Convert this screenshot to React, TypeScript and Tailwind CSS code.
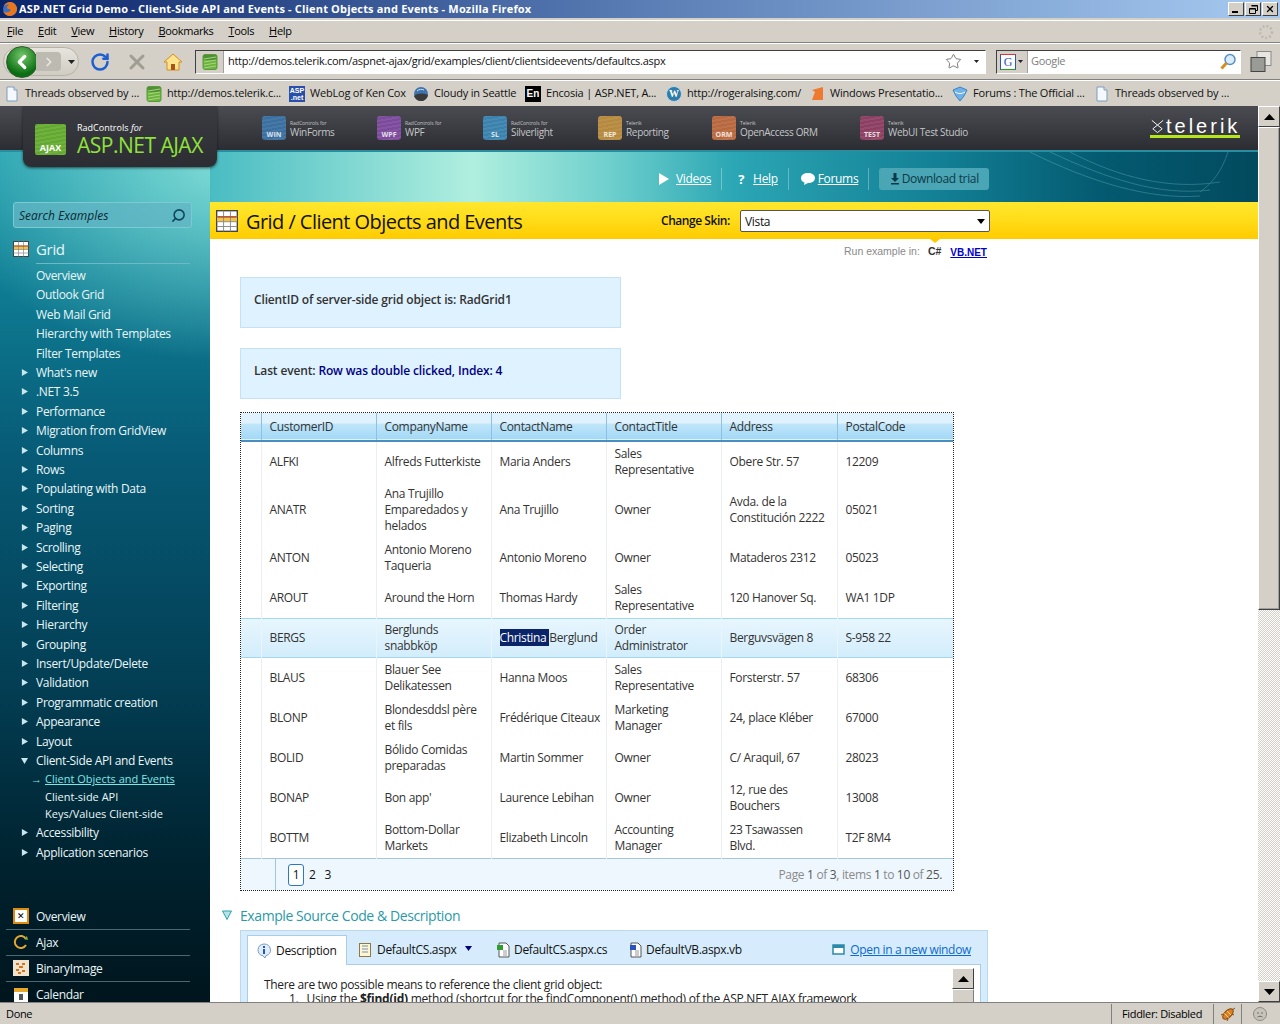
import React from 'react';
import { RotateCw, X, Star, Search, ChevronLeft, ChevronRight } from 'lucide-react';

const menuItems = ['File', 'Edit', 'View', 'History', 'Bookmarks', 'Tools', 'Help'];

const products = [
  { tag: 'WIN', name: 'WinForms', small: 'RadControls for', color: 'bg-[#3a6f9f]', width: 'w-[115px]' },
  { tag: 'WPF', name: 'WPF', small: 'RadControls for', color: 'bg-[#7c4a9b]', width: 'w-[106px]' },
  { tag: 'SL', name: 'Silverlight', small: 'RadControls for', color: 'bg-[#3a82ad]', width: 'w-[115px]' },
  { tag: 'REP', name: 'Reporting', small: 'Telerik', color: 'bg-[#b58a3f]', width: 'w-[114px]' },
  { tag: 'ORM', name: 'OpenAccess ORM', small: 'Telerik', color: 'bg-[#b8683f]', width: 'w-[148px]' },
  { tag: 'TEST', name: 'WebUI Test Studio', small: 'Telerik', color: 'bg-[#8c3f62]', width: 'w-[130px]' },
];

const navTop = ['Overview', 'Outlook Grid', 'Web Mail Grid', 'Hierarchy with Templates', 'Filter Templates'];
const navArrow = [
  "What's new", '.NET 3.5', 'Performance', 'Migration from GridView', 'Columns', 'Rows', 'Populating with Data',
  'Sorting', 'Paging', 'Scrolling', 'Selecting', 'Exporting', 'Filtering', 'Hierarchy', 'Grouping',
  'Insert/Update/Delete', 'Validation', 'Programmatic creation', 'Appearance', 'Layout',
];

const rows = [
  { id: 'ALFKI', company: 'Alfreds Futterkiste', contact: 'Maria Anders', title: 'Sales Representative', address: 'Obere Str. 57', postal: '12209' },
  { id: 'ANATR', company: 'Ana Trujillo Emparedados y helados', contact: 'Ana Trujillo', title: 'Owner', address: 'Avda. de la Constitución 2222', postal: '05021' },
  { id: 'ANTON', company: 'Antonio Moreno Taqueria', contact: 'Antonio Moreno', title: 'Owner', address: 'Mataderos 2312', postal: '05023' },
  { id: 'AROUT', company: 'Around the Horn', contact: 'Thomas Hardy', title: 'Sales Representative', address: '120 Hanover Sq.', postal: 'WA1 1DP' },
  { id: 'BERGS', company: 'Berglunds snabbköp', contact: 'Christina Berglund', title: 'Order Administrator', address: 'Berguvsvägen 8', postal: 'S-958 22', selected: true },
  { id: 'BLAUS', company: 'Blauer See Delikatessen', contact: 'Hanna Moos', title: 'Sales Representative', address: 'Forsterstr. 57', postal: '68306' },
  { id: 'BLONP', company: 'Blondesddsl père et fils', contact: 'Frédérique Citeaux', title: 'Marketing Manager', address: '24, place Kléber', postal: '67000' },
  { id: 'BOLID', company: 'Bólido Comidas preparadas', contact: 'Martin Sommer', title: 'Owner', address: 'C/ Araquil, 67', postal: '28023' },
  { id: 'BONAP', company: "Bon app'", contact: 'Laurence Lebihan', title: 'Owner', address: '12, rue des Bouchers', postal: '13008' },
  { id: 'BOTTM', company: 'Bottom-Dollar Markets', contact: 'Elizabeth Lincoln', title: 'Accounting Manager', address: '23 Tsawassen Blvd.', postal: 'T2F 8M4' },
];

const columns = ['CustomerID', 'CompanyName', 'ContactName', 'ContactTitle', 'Address', 'PostalCode'];

function PageIcon() {
  return (
    <svg width="16" height="16" viewBox="0 0 16 16" className="shrink-0">
      <path d="M3 1h7l3 3v11H3z" fill="#f4f8ff" stroke="#7f9db9" />
      <path d="M10 1v3h3" fill="#dbe6f5" stroke="#7f9db9" />
    </svg>
  );
}

function GreenFavicon() {
  return (
    <svg width="16" height="16" viewBox="0 0 16 16" className="shrink-0">
      <rect x="1" y="0.5" width="14" height="15" rx="2" fill="#6cb33f" stroke="#5a9a3a" />
      <rect x="1.5" y="1" width="13" height="5" fill="#4f8f35" />
      <path d="M2 5l12-2M2 8l12-2M2 11l12-2M2 14l12-2" stroke="#a6d67a" />
    </svg>
  );
}

function BookmarkIcon({ kind }: { kind: string }) {
  if (kind === 'page') return <PageIcon />;
  if (kind === 'green') return <GreenFavicon />;
  if (kind === 'asp')
    return (
      <div className="w-4 h-4 bg-[#2a4fa8] text-white text-[7px] tracking-normal font-bold leading-[7px] flex flex-col items-center justify-center shrink-0 font-['Liberation_Sans',sans-serif]">
        <span>ASP</span>
        <span>.net</span>
      </div>
    );
  if (kind === 'cloud')
    return (
      <svg width="16" height="16" viewBox="0 0 16 16" className="shrink-0">
        <circle cx="8" cy="8" r="7" fill="#3d74b0" />
        <path d="M1 10c4-3 9-3 14-1-1 4-4 6-7 6s-6-2-7-5z" fill="#3a3a3a" />
        <path d="M4 5c2-2 5-2 7-1" stroke="#cfe3f7" fill="none" />
      </svg>
    );
  if (kind === 'en')
    return (
      <div className="w-4 h-4 bg-black text-white text-[10px] tracking-normal font-bold leading-4 text-center shrink-0 font-['Liberation_Sans',sans-serif]">
        En
      </div>
    );
  if (kind === 'wp')
    return (
      <div className="w-4 h-4 rounded-full bg-[#2f7ca8] border border-[#bcd6e6] text-white text-[10px] tracking-normal font-bold leading-[14px] text-center shrink-0 font-['Liberation_Serif',serif]">
        W
      </div>
    );
  if (kind === 'wpf')
    return (
      <svg width="16" height="16" viewBox="0 0 16 16" className="shrink-0">
        <path d="M3 14L6 6 3 4 14 1v13H8z" fill="#ee7a2f" />
      </svg>
    );
  return (
    <svg width="16" height="16" viewBox="0 0 16 16" className="shrink-0">
      <path d="M1 4l7-3 7 3-3 6-4 5-4-5z" fill="#6fb1e8" stroke="#3f83c2" />
      <path d="M3 6c3 2 7 2 10 0" stroke="#fff" fill="none" />
    </svg>
  );
}

const bookmarks = [
  { kind: 'page', label: 'Threads observed by ...', width: 'w-[142px]' },
  { kind: 'green', label: 'http://demos.telerik.c...', width: 'w-[143px]' },
  { kind: 'asp', label: 'WebLog of Ken Cox', width: 'w-[124px]' },
  { kind: 'cloud', label: 'Cloudy in Seattle', width: 'w-[112px]' },
  { kind: 'en', label: 'Encosia | ASP.NET, A...', width: 'w-[141px]' },
  { kind: 'wp', label: 'http://rogeralsing.com/', width: 'w-[143px]' },
  { kind: 'wpf', label: 'Windows Presentatio...', width: 'w-[143px]' },
  { kind: 'forum', label: 'Forums : The Official ...', width: 'w-[142px]' },
  { kind: 'page', label: 'Threads observed by ...', width: 'w-[142px]' },
];

function GridIcon({ size }: { size: number }) {
  return (
    <svg width={size} height={size} viewBox="0 0 16 16" className="shrink-0">
      <rect x="0.5" y="0.5" width="15" height="15" fill="#fff" stroke="#444" />
      <rect x="1" y="5" width="14" height="3.5" fill="#f5c542" />
      <path d="M0.5 5h15M0.5 8.5h15M0.5 12h15M5.5 0.5v15M10.5 0.5v15" stroke="#8a8a8a" strokeWidth="0.7" fill="none" />
      <path d="M1 5h14" stroke="#b5482a" />
    </svg>
  );
}

function NavArrow({ open }: { open?: boolean }) {
  return (
    <svg width="7" height="7" viewBox="0 0 8 8" className="absolute left-[21px] top-[6px]">
      {open ? <path d="M0 1h8L4 8z" fill="#c8e6ee" /> : <path d="M1 0l7 4-7 4z" fill="#c8e6ee" />}
    </svg>
  );
}

function Sidebar() {
  return (
    <aside className="w-[210px] shrink-0 h-full overflow-hidden text-[#eaf6f8] text-[12px] leading-[19px] bg-[radial-gradient(ellipse_300px_200px_at_230px_10px,#7fdcd6_0%,rgba(60,170,185,0)_100%),linear-gradient(180deg,#1c9bac_0%,#0f7f96_14%,#075a75_36%,#033f55_62%,#00222f_84%,#00151d_100%)]">
      <div className="pt-[50px] pl-[13px]">
        <div className="w-[179px] h-[26px] rounded-[3px] border border-[#7ccbd2] bg-[#62b6c4]/75 flex items-center justify-between pl-[5px] pr-[5px]">
          <span className="italic text-[12px] tracking-normal text-[#0c2a33]">Search Examples</span>
          <Search size={15} strokeWidth={2.5} className="text-[#10475a] -scale-x-100" />
        </div>
      </div>
      <div className="mt-[10px] pl-[13px] flex items-center h-[22px]">
        <GridIcon size={16} />
        <span className="ml-[7px] text-[15px]">Grid</span>
      </div>
      <div className="ml-[36px] w-[154px] mt-[3px] border-t border-[#6fb9c6]" />
      <ul className="mt-[2px] pl-[36px]">
        {navTop.map((item) => (
          <li key={item} className="h-[19.4px] whitespace-nowrap">
            {item}
          </li>
        ))}
      </ul>
      <ul>
        {navArrow.map((item) => (
          <li key={item} className="relative h-[19.42px] pl-[36px] whitespace-nowrap">
            <NavArrow />
            {item}
          </li>
        ))}
        <li className="relative h-[19.4px] pl-[36px] whitespace-nowrap">
          <NavArrow open />
          Client-Side API and Events
        </li>
        <li className="relative h-[17.5px] pl-[45px] leading-[17px] text-[11px] tracking-normal whitespace-nowrap">
          <span className="absolute left-[31px] top-0 text-[#7fe6e6]">→</span>
          <span className="text-[#7fe6e6] underline">Client Objects and Events</span>
        </li>
        <li className="h-[17.5px] pl-[45px] leading-[17px] text-[11px] tracking-normal whitespace-nowrap">Client-side API</li>
        <li className="h-[18px] pl-[45px] leading-[17px] text-[11px] tracking-normal whitespace-nowrap">Keys/Values Client-side</li>
        <li className="relative h-[20px] pl-[36px] whitespace-nowrap">
          <NavArrow />
          Accessibility
        </li>
        <li className="relative h-[19.35px] pl-[36px] whitespace-nowrap">
          <NavArrow />
          Application scenarios
        </li>
      </ul>
      <ul className="mt-[41px] ml-[6px] w-[184px]">
        <BottomNav label="Overview" icon={<div className="w-4 h-4 bg-white border-2 border-[#e08a10] text-[9px] leading-[12px] text-center text-black">✕</div>} />
        <BottomNav
          label="Ajax"
          icon={
            <svg width="16" height="16" viewBox="0 0 16 16">
              <path d="M13 11a6 6 0 1 1 0-6" fill="none" stroke="#e3a830" strokeWidth="2" />
              <path d="M11 5l4 1-1-4z" fill="#7cb342" />
            </svg>
          }
        />
        <BottomNav
          label="BinaryImage"
          icon={
            <svg width="16" height="16" viewBox="0 0 16 16">
              <rect width="16" height="16" fill="#f1e4cf" />
              <path d="M3 3h3v2H3zM9 3h3v2H9zM6 6h4v2H6zM3 9h3v2H3zM9 10h3v2H9zM5 12h3v2H5z" fill="#d9731a" />
            </svg>
          }
        />
        <BottomNav
          label="Calendar"
          icon={
            <svg width="16" height="16" viewBox="0 0 16 16">
              <rect x="1" y="1" width="14" height="15" fill="#fff" />
              <rect x="1" y="1" width="14" height="4" fill="#e8a82a" />
              <rect x="6" y="7" width="4" height="6" fill="#555" />
            </svg>
          }
        />
      </ul>
    </aside>
  );
}

function BottomNav({ label, icon }: { label: string; icon: React.ReactNode }) {
  return (
    <li className="h-[26px] flex items-center border-b border-[#4e6670] pl-[7px] last:border-b-0">
      <span className="w-[23px] shrink-0">{icon}</span>
      <span>{label}</span>
    </li>
  );
}

function Scrollbar() {
  return (
    <div className="w-[22px] shrink-0 flex flex-col bg-[repeating-conic-gradient(#d4d0c8_0%_25%,#ffffff_0%_50%)] bg-[length:2px_2px]">
      <ScrollButton up />
      <div className="h-[483px] w-full bg-[#d4d0c8] border border-t-white border-l-white border-r-[#404040] border-b-[#404040] shadow-[inset_-1px_-1px_0_#a0a0a0]" />
      <div className="flex-1" />
      <ScrollButton />
    </div>
  );
}

function ScrollButton({ up }: { up?: boolean }) {
  return (
    <div className="w-full h-[21px] shrink-0 bg-[#d4d0c8] border border-t-white border-l-white border-r-[#404040] border-b-[#404040] flex items-center justify-center">
      <svg width="11" height="6" viewBox="0 0 11 6">
        <path d={up ? 'M5.5 0L11 6H0z' : 'M0 0h11L5.5 6z'} fill="#000" />
      </svg>
    </div>
  );
}

function Grid() {
  return (
    <div className="ml-[30px] mt-[13px] w-[714px] border border-dotted border-[#222] text-[12px] leading-[16px] text-[#333]">
      <table className="w-full table-fixed border-collapse">
        <colgroup>
          <col className="w-[20px]" />
          <col className="w-[115px]" />
          <col className="w-[115px]" />
          <col className="w-[115px]" />
          <col className="w-[115px]" />
          <col className="w-[116px]" />
          <col className="w-[116px]" />
        </colgroup>
        <thead>
          <tr className="h-[28px] border-b-2 border-[#4a8ec0] bg-[linear-gradient(180deg,#dff2fd_0%,#dff2fd_38%,#bfe5fa_44%,#a3d9f6_100%)]">
            <th className="border-r border-[#8cc1e2]" />
            {columns.map((c) => (
              <th key={c} className="px-2 pt-[1px] font-normal text-left border-r border-[#8cc1e2] last:border-r-0">
                {c}
              </th>
            ))}
          </tr>
        </thead>
        <tbody>
          {rows.map((r) => {
            const cell = r.selected
              ? 'px-2 py-[4px] border-r border-[#eaf5fb] last:border-r-0 shadow-[inset_0_1px_0_#a4d8f2,inset_0_-1px_0_#a4d8f2]'
              : 'px-2 py-[4px] border-r border-[#eceff1] last:border-r-0';
            return (
              <tr key={r.id} className={r.selected ? 'h-[40px] bg-[linear-gradient(180deg,#e8f6fe_0%,#d2edfb_100%)]' : 'h-[40px]'}>
                <td className={cell} />
                <td className={cell}>{r.id}</td>
                <td className={cell}>{r.company}</td>
                <td className={`${cell} whitespace-nowrap`}>
                  {r.selected ? (
                    <>
                      <span className="bg-[#0a246a] text-white">Christina </span>Berglund
                    </>
                  ) : (
                    r.contact
                  )}
                </td>
                <td className={cell}>{r.title}</td>
                <td className={cell}>{r.address}</td>
                <td className={cell}>{r.postal}</td>
              </tr>
            );
          })}
          <tr className="border-t border-[#a4c6da] bg-[#eef7fe]">
            <td colSpan={7} className="p-0">
              <div className="flex h-[31px] items-center">
                <div className="w-[35px] h-full border-r border-[#a4c6da]" />
                <div className="ml-[12px] flex items-center gap-[5px] text-[#111]">
                  <span className="w-[16px] h-[22px] rounded-[3px] border border-[#2a78c8] bg-white text-center leading-[20px]">1</span>
                  <span>2</span>
                  <span className="ml-[4px]">3</span>
                </div>
                <div className="ml-auto mr-[11px] text-[#8a8a8a]">
                  Page <span className="text-[#555]">1</span> of <span className="text-[#555]">3</span>, items <span className="text-[#555]">1</span> to <span className="text-[#555]">10</span> of <span className="text-[#555]">25.</span>
                </div>
              </div>
            </td>
          </tr>
        </tbody>
      </table>
    </div>
  );
}

function SourcePanel() {
  return (
    <div className="mt-[15px]">
      <div className="pl-[12px] flex items-center h-[18px]">
        <svg width="10" height="10" viewBox="0 0 10 10" className="mr-[8px]">
          <path d="M0.5 1h9L5 9.5z" fill="#b4e4ea" stroke="#2fa0ad" />
        </svg>
        <span className="text-[14px] tracking-[-0.42px] text-[#2a9aa8]">Example Source Code &amp; Description</span>
      </div>
      <div className="ml-[30px] mt-[6px] w-[748px] border border-[#bcd9ec] bg-[#d6ecfc] px-[6px] pt-[4px]">
        <div className="flex items-end h-[29px] text-[12px] text-[#111]">
          <div className="w-[100px] h-[30px] -mb-px bg-white border border-b-0 border-[#a9cde6] flex items-center pl-[8px] gap-[4px] relative z-10 shrink-0">
            <svg width="16" height="16" viewBox="0 0 16 16" className="shrink-0">
              <path d="M8 1a6.5 6 0 0 1 2 11.7L9 15l-2-2.2A6.5 6 0 0 1 8 1z" fill="#dfeeff" stroke="#7f9db9" />
              <rect x="7" y="6" width="2" height="5" fill="#2a55c0" />
              <rect x="7" y="3" width="2" height="2" fill="#2a55c0" />
            </svg>
            Description
          </div>
          <div className="w-[150px] h-[29px] flex items-center pl-[11px] gap-[5px] shrink-0">
            <svg width="14" height="14" viewBox="0 0 14 14" className="shrink-0">
              <rect x="1.5" y="0.5" width="11" height="13" fill="#fff6cf" stroke="#8a7a4a" />
              <path d="M4 3h6M4 6h6M4 9h6" stroke="#6f8fbf" />
            </svg>
            DefaultCS.aspx
            <svg width="7" height="5" viewBox="0 0 7 5" className="ml-[3px] mb-[3px]">
              <path d="M0 0h7L3.5 5z" fill="#00007f" />
            </svg>
          </div>
          <div className="w-[132px] h-[29px] flex items-center gap-[3px] shrink-0">
            <svg width="14" height="16" viewBox="0 0 14 16" className="shrink-0">
              <path d="M2 1h7l3 3v11H2z" fill="#fff" stroke="#555" />
              <path d="M6 9h4M6 11h4M6 13h4" stroke="#9a9a9a" />
              <path d="M0 3h6v5H0z" fill="#2e9e2e" />
            </svg>
            DefaultCS.aspx.cs
          </div>
          <div className="h-[29px] flex items-center gap-[3px] shrink-0">
            <svg width="14" height="16" viewBox="0 0 14 16" className="shrink-0">
              <path d="M2 1h7l3 3v11H2z" fill="#fff" stroke="#555" />
              <path d="M6 9h4M6 11h4M6 13h4" stroke="#9a9a9a" />
              <path d="M1 3h6v5H1z" fill="#2a55c0" />
            </svg>
            DefaultVB.aspx.vb
          </div>
          <div className="ml-auto mr-[10px] h-[29px] flex items-center gap-[5px] text-[#0a6ad0] underline shrink-0">
            <svg width="13" height="12" viewBox="0 0 13 12" className="shrink-0">
              <rect x="1" y="1" width="11" height="9" fill="#fff" stroke="#2a8aa8" strokeWidth="1.5" />
              <rect x="1" y="1" width="11" height="3" fill="#2a8aa8" />
            </svg>
            Open in a new window
          </div>
        </div>
        <div className="bg-white border border-[#a9cde6] h-[60px] relative pl-[16px] pt-[13px] text-[12px] leading-[14px] text-[#222]">
          <p>There are two possible means to reference the client grid object:</p>
          <p className="pl-[25px] flex gap-[8px] tracking-[-0.25px] whitespace-nowrap">
            <span>1.</span>
            <span>
              Using the <b>$find(id)</b> method (shortcut for the findComponent() method) of the ASP.NET AJAX framework
            </span>
          </p>
          <div className="absolute right-[6px] top-[3px] w-[22px]">
            <ScrollButton up />
            <div className="h-[30px] bg-[#d4d0c8] border border-t-white border-l-white border-r-[#808080]" />
          </div>
        </div>
      </div>
    </div>
  );
}

export default function App() {
  return (
    <div className="w-[1280px] h-[1024px] overflow-hidden flex flex-col bg-[#d4d0c8] tracking-[-0.33px] font-['Open_Sans','Noto_Sans',sans-serif]">
      {/* window title */}
      <div className="h-[18px] shrink-0 flex items-center bg-[linear-gradient(90deg,#0a246a_0%,#5a7db5_50%,#a6caf0_100%)] text-white text-[11px] tracking-[0.17px] font-bold">
        <svg width="16" height="16" viewBox="0 0 16 16" className="ml-[2px] mr-[1px] shrink-0">
          <circle cx="8" cy="8" r="7" fill="#3d6fc0" />
          <path d="M2 5c1-3 4-4 6-4 3 0 6 2 7 6 .5 4-3 8-7 8-3 0-6-2-7-5 1 1 3 2 5 1 2 0 3-2 2-3-2 0-3 0-3-2 0-1 1-1 2-2-2-1-3 0-5 1z" fill="#e8761c" />
        </svg>
        <span className="whitespace-nowrap">ASP.NET Grid Demo - Client-Side API and Events - Client Objects and Events - Mozilla Firefox</span>
        <div className="ml-auto mr-[2px] flex gap-[1px]">
          {['_', '', 'x'].map((b, i) => (
            <div key={i} className="w-[16px] h-[14px] bg-[#d4d0c8] border border-t-white border-l-white border-r-[#404040] border-b-[#404040] flex items-center justify-center text-black">
              {i === 0 && <div className="w-[6px] h-[2px] bg-black mt-[6px] -ml-[2px]" />}
              {i === 1 && (
                <svg width="9" height="9" viewBox="0 0 9 9">
                  <path d="M2.5 0.5h6v5h-2M0.5 3.5h6v5h-6z M0.5 4h6M2.5 1h6" fill="none" stroke="#000" />
                </svg>
              )}
              {i === 2 && <X size={10} strokeWidth={3} />}
            </div>
          ))}
        </div>
      </div>

      {/* menu bar */}
      <div className="h-[23px] shrink-0 mt-[2px] border-t border-white border-b border-b-[#808080] flex items-center pl-[7px] gap-[15px] text-[11px] text-black">
        {menuItems.map((m) => (
          <span key={m}>
            <span className="underline">{m[0]}</span>
            {m.slice(1)}
          </span>
        ))}
        <svg width="16" height="16" viewBox="0 0 16 16" className="ml-auto mr-[6px]">
          <circle cx="8" cy="8" r="6" fill="none" stroke="#bdb9b0" strokeWidth="2.5" strokeDasharray="2 2" />
        </svg>
      </div>

      {/* nav toolbar */}
      <div className="h-[37px] shrink-0 border-t border-white border-b border-b-[#808080] flex items-center pl-[3px] text-[11px]">
        <div className="relative w-[76px] h-[29px] rounded-full bg-[linear-gradient(180deg,#e6e4dd,#cfccc3)] border border-[#b5b2a8] flex items-center">
          <div className="absolute left-[2px] -top-[2px] w-[32px] h-[32px] rounded-full bg-[radial-gradient(circle_at_50%_30%,#72c76a,#0c6e12_70%)] border border-[#2c5a2c] flex items-center justify-center">
            <ChevronLeft size={22} strokeWidth={3.5} className="text-white" />
          </div>
          <div className="absolute left-[32px] top-[4px] w-[25px] h-[19px] rounded-r-[4px] bg-[#bdbab1] flex items-center justify-center">
            <ChevronRight size={14} strokeWidth={3} className="text-[#e8e6df]" />
          </div>
          <svg width="7" height="4" viewBox="0 0 7 4" className="absolute left-[64px]">
            <path d="M0 0h7L3.5 4z" fill="#222" />
          </svg>
        </div>
        <RotateCw size={20} strokeWidth={3} className="ml-[11px] text-[#1d5fd0]" />
        <X size={24} strokeWidth={3} className="ml-[15px] text-[#a09d95]" />
        <svg width="20" height="20" viewBox="0 0 20 20" className="ml-[14px]">
          <path d="M10 2L1 10h3v8h12v-8h3z" fill="#fbe48c" stroke="#d98b1c" />
          <rect x="8" y="12" width="4" height="6" fill="#a8521c" />
        </svg>
        <div className="ml-[12px] w-[791px] h-[24px] border border-t-[#404040] border-l-[#404040] border-r-white border-b-white bg-white flex items-center">
          <div className="w-[28px] h-full bg-[#d4d0c8] flex items-center justify-center border-r border-[#a0a0a0]">
            <GreenFavicon />
          </div>
          <span className="ml-[4px] text-[#111] tracking-[-0.29px] whitespace-nowrap">http://demos.telerik.com/aspnet-ajax/grid/examples/client/clientsideevents/defaultcs.aspx</span>
          <Star size={17} strokeWidth={1.2} className="ml-auto text-[#666]" />
          <svg width="5" height="3" viewBox="0 0 7 4" className="ml-[12px] mr-[6px]">
            <path d="M0 0h7L3.5 4z" fill="#222" />
          </svg>
        </div>
        <div className="ml-[10px] w-[245px] h-[24px] border border-t-[#404040] border-l-[#404040] border-r-white border-b-white bg-white flex items-center">
          <div className="w-[31px] h-full bg-[#d4d0c8] flex items-center pl-[3px] gap-[2px] border-r border-[#a0a0a0]">
            <div className="w-[16px] h-[16px] bg-white border border-t-[#d33] border-l-[#2a55c0] border-r-[#2a55c0] border-b-[#2a9e2a] text-[#2a55c0] text-[12px] leading-[14px] text-center font-['Liberation_Serif',serif]">G</div>
            <svg width="5" height="3" viewBox="0 0 7 4">
              <path d="M0 0h7L3.5 4z" fill="#222" />
            </svg>
          </div>
          <span className="ml-[3px] text-[#808080]">Google</span>
          <svg width="18" height="18" viewBox="0 0 18 18" className="ml-auto mr-[3px]">
            <circle cx="11" cy="6.5" r="5" fill="#d8edfb" stroke="#5a8fc4" strokeWidth="1.5" />
            <path d="M7.5 10L2.5 15.5" stroke="#d98b1c" strokeWidth="3" />
          </svg>
        </div>
        <svg width="24" height="24" viewBox="0 0 24 24" className="ml-[8px]">
          <rect x="8" y="1.5" width="14" height="14" fill="#e8e6e0" stroke="#8a8a8a" />
          <rect x="2" y="7.5" width="14" height="14" fill="#9a9a96" stroke="#444" />
        </svg>
      </div>

      {/* bookmarks toolbar */}
      <div className="h-[26px] shrink-0 flex items-center pl-[4px] text-[11px] tracking-[-0.2px] text-[#111] border-t border-white">
        {bookmarks.map((b, i) => (
          <div key={i} className={`${b.width} flex items-center gap-[5px] whitespace-nowrap`}>
            <BookmarkIcon kind={b.kind} />
            <span>{b.label}</span>
          </div>
        ))}
      </div>

      {/* page + scrollbar */}
      <div className="flex h-[896px] shrink-0 overflow-hidden bg-white">
        <div className="flex-1 min-w-0 relative flex flex-col">
          {/* dark product strip */}
          <div className="h-[46px] shrink-0 bg-[linear-gradient(180deg,#4a4c52_0%,#2b2d32_100%)] border-b-2 border-[#2b8ea0] flex items-start pl-[262px] pt-[10px]">
            {products.map((p) => (
              <div key={p.tag} className={`${p.width} shrink-0 flex items-center gap-[4px]`}>
                <div className={`${p.color} bg-[repeating-linear-gradient(170deg,rgba(255,255,255,0.07)_0px,rgba(255,255,255,0.07)_2px,rgba(0,0,0,0)_2px,rgba(0,0,0,0)_4px)] w-[24px] h-[24px] rounded-[3px] flex items-end justify-center text-[7px] tracking-normal font-bold text-white/80 leading-[10px]`}>{p.tag}</div>
                <div className="text-[#c4c6c8] text-[10px] leading-[10px] whitespace-nowrap">
                  <div className="text-[5px] leading-[8px] tracking-normal">{p.small}</div>
                  <div>{p.name}</div>
                </div>
              </div>
            ))}
            <div className="absolute left-[1150px] top-[7px] w-[90px] h-[25px] text-white text-[20px] leading-[22px] tracking-[3px] font-['Liberation_Sans',sans-serif] border-b-[3px] border-[#b5e61d] flex items-center whitespace-nowrap overflow-hidden pt-[3px]">
              <svg width="15" height="16" viewBox="0 0 16 16" className="mr-[1px] shrink-0">
                <path d="M2 2l6 5 6-5M8 7l5 4-5 4-5-4z" fill="none" stroke="#fff" />
              </svg>
              <span>telerik</span>
            </div>
          </div>
          {/* logo card */}
          <div className="absolute left-[23px] top-0 w-[194px] h-[61px] rounded-b-[8px] bg-[linear-gradient(180deg,#3a3c42,#2b2d32)] shadow-[0_1px_3px_rgba(0,0,0,0.6)] z-10 flex items-center pl-[12px] pt-[6px]">
            <div className="w-[31px] h-[31px] rounded-[2px] bg-[#6fb43a] bg-[repeating-linear-gradient(170deg,rgba(0,0,0,0.08)_0px,rgba(0,0,0,0.08)_2px,rgba(255,255,255,0)_2px,rgba(255,255,255,0)_4px)] flex items-end justify-center text-white text-[9px] tracking-normal font-bold leading-[14px] shrink-0">AJAX</div>
            <div className="ml-[11px]">
              <div className="text-white text-[9px] tracking-normal leading-[10px]">
                RadControls <i>for</i>
              </div>
              <div className="text-[#8fe23a] text-[21px] tracking-[-0.5px] leading-[24px] whitespace-nowrap">ASP.NET AJAX</div>
            </div>
          </div>

          <div className="flex flex-1 min-h-0">
            <Sidebar />
            <div className="relative flex-1 min-w-0 overflow-hidden">
              {/* teal link strip */}
              <div className="relative h-[50px] overflow-hidden bg-[linear-gradient(90deg,#49bcc2_0%,#b0efdf_25%,#6fd0cd_38%,#2ba6b4_50%,#127f94_70%,#045a70_85%,#024a5e_100%)] flex items-center pl-[449px] pt-[4px] text-[12px] text-white">
                <svg width="860" height="50" viewBox="0 0 860 50" className="absolute left-[800px] top-0 opacity-25">
                  <path d="M20 0c60 30 120 48 170 44M40 0c60 28 110 44 160 38M60 0c50 26 100 38 150 30M218 0c-6 18-14 30-28 40" fill="none" stroke="#9fe6ea" />
                </svg>
                <svg width="10" height="12" viewBox="0 0 10 12" className="shrink-0">
                  <path d="M0 0l10 6-10 6z" fill="#fff" />
                </svg>
                <span className="ml-[7px] underline">Videos</span>
                <span className="ml-[10px] w-px h-[22px] bg-white/30" />
                <span className="ml-[16px] font-bold text-[13px] leading-none">?</span>
                <span className="ml-[9px] underline">Help</span>
                <span className="ml-[10px] w-px h-[22px] bg-white/30" />
                <svg width="16" height="12" viewBox="0 0 16 12" className="ml-[11px] shrink-0">
                  <path d="M8 0c4 0 7 2 7 5s-3 5-7 5L4 12l.5-2.5C2 9 1 7 1 5c0-3 3-5 7-5z" fill="#fff" />
                </svg>
                <span className="ml-[2px] underline">Forums</span>
                <span className="ml-[10px] w-px h-[22px] bg-white/30" />
                <span className="ml-[10px] w-[110px] h-[22px] rounded-[3px] bg-[#4aa5b5] flex items-center justify-center gap-[2px] text-[#0c3a48]">
                  <svg width="10" height="12" viewBox="0 0 10 12" className="shrink-0">
                    <path d="M3.5 0h3v5H9L5 9 1 5h2.5zM1 10h8v1.5H1z" fill="#0c3a48" />
                  </svg>
                  Download trial
                </span>
              </div>
              {/* yellow title strip */}
              <div className="relative h-[37px] bg-[linear-gradient(180deg,#ffe62e_0%,#ffdf1d_40%,#ffcb00_100%)] flex items-center pl-[6px]">
                <GridIcon size={22} />
                <span className="ml-[8px] mt-[2px] text-[20px] tracking-[-0.55px] text-[#111] whitespace-nowrap">Grid / Client Objects and Events</span>
                <span className="absolute left-[451px] top-[10px] text-[12px] tracking-[-0.45px] font-semibold text-[#111]">Change Skin:</span>
                <div className="absolute left-[530px] top-[8px] w-[250px] h-[22px] bg-white border border-[#555] rounded-[2px] flex items-center justify-between pl-[4px] pr-[4px] pt-[1px] text-[12px] text-[#111]">
                  Vista
                  <svg width="8" height="5" viewBox="0 0 8 5">
                    <path d="M0 0h8L4 5z" fill="#000" />
                  </svg>
                </div>
                <div className="absolute left-[720px] top-[37px] w-0 h-0 border-x-[5px] border-x-transparent border-t-[4px] border-t-[#ffcb00]" />
              </div>
              {/* language switch */}
              <div className="h-[26px] flex items-center pl-[634px] text-[10.5px] tracking-normal font-['Liberation_Sans',sans-serif] text-[#8a8a8a] whitespace-nowrap">
                Run example in:
                <b className="ml-[8px] text-[#333]">C#</b>
                <b className="ml-[9px] text-[10px] text-[#0000cc] underline">VB.NET</b>
              </div>
              <div className="ml-[30px] mt-[12px] w-[381px] h-[51px] bg-[#dff2ff] border border-[#c4e2f3] pl-[13px] pt-[14px] text-[12px] tracking-[-0.15px] leading-[16px] font-semibold text-[#333]">
                ClientID of server-side grid object is: RadGrid1
              </div>
              <div className="ml-[30px] mt-[20px] w-[381px] h-[51px] bg-[#dff2ff] border border-[#c4e2f3] pl-[13px] pt-[14px] text-[12px] tracking-[-0.15px] leading-[16px] font-semibold text-[#333]">
                Last event: <span className="text-[#000080]">Row was double clicked, Index: 4</span>
              </div>
              <Grid />
              <SourcePanel />
            </div>
          </div>
        </div>
        <Scrollbar />
      </div>

      {/* status bar */}
      <div className="h-[22px] shrink-0 border-t border-[#808080] flex items-center text-[11px] text-black pt-[1px]">
        <span className="ml-[6px]">Done</span>
        <div className="ml-auto mr-[3px] h-full flex">
          <div className="w-[102px] border-l border-[#808080] pl-[10px] leading-[20px] whitespace-nowrap">Fiddler: Disabled</div>
          <div className="w-[28px] border-l border-[#808080] flex items-center justify-center">
            <svg width="16" height="16" viewBox="0 0 16 16">
              <ellipse cx="8" cy="8" rx="3.5" ry="6.5" transform="rotate(45 8 8)" fill="#e0801c" stroke="#8a4a10" />
              <path d="M4.5 7.5l4 4M7 5l4 4" stroke="#f8d8a0" />
              <path d="M12 4l3-2M3 8l-2 1M8 13l-1 2M12 8l2 1" stroke="#8a4a10" />
            </svg>
          </div>
          <div className="w-[36px] border-l border-[#808080] flex items-center justify-center">
            <svg width="16" height="16" viewBox="0 0 16 16">
              <circle cx="8" cy="8" r="6.5" fill="#c8c4bc" stroke="#8a8a84" />
              <circle cx="6" cy="7" r="0.8" fill="#666" />
              <circle cx="10" cy="7" r="0.8" fill="#666" />
              <path d="M5.5 11c1.5-1 3.5-1 5 0" stroke="#666" fill="none" />
            </svg>
          </div>
        </div>
      </div>
    </div>
  );
}
